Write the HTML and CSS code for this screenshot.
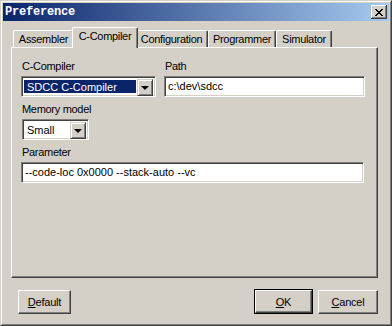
FILE: index.html
```html
<!DOCTYPE html>
<html lang="en">
<head>
    <meta charset="UTF-8">
    <title>Preference</title>
    <link rel="stylesheet" href="styles.css">
</head>
<body>

<div class="window">
    <div class="window-inner">
        <div class="title-bar">
            <span class="title">Preference</span>
            <button class="close-button">
                <svg width="8" height="7" viewBox="0 0 8 7">
                    <path d="M0 0h2v1h1v1h2v-1h1v-1h2v1h-1v1h-1v1h-1v1h1v1h1v1h1v1h-2v-1h-1v-1h-2v1h-1v1h-2v-1h1v-1h1v-1h1v-1h-1v-1h-1v-1h-1z" fill="#000"/>
                </svg>
            </button>
        </div>

        <div class="content">
            <div class="tabs">
                <div class="tab tab-assembler">Assembler</div>
                <div class="tab tab-compiler active">C-Compiler</div>
                <div class="tab tab-config">Configuration</div>
                <div class="tab tab-programmer">Programmer</div>
                <div class="tab tab-simulator">Simulator</div>
            </div>

            <div class="panel">
                <div class="row">
                    <div class="field compiler-field">
                        <label>C-Compiler</label>
                        <div class="combo combo-compiler">
                            <span class="combo-value selected">SDCC C-Compiler</span>
                            <span class="combo-button"><span class="arrow"></span></span>
                        </div>
                    </div>
                    <div class="field path-field">
                        <label>Path</label>
                        <div class="textbox">c:\dev\sdcc</div>
                    </div>
                </div>

                <div class="field">
                    <label>Memory model</label>
                    <div class="combo combo-memory">
                        <span class="combo-value">Small</span>
                        <span class="combo-button"><span class="arrow"></span></span>
                    </div>
                </div>

                <div class="field">
                    <label>Parameter</label>
                    <div class="textbox textbox-wide">--code-loc 0x0000 --stack-auto --vc</div>
                </div>
            </div>

            <div class="buttons">
                <button class="btn btn-default"><u>D</u>efault</button>
                <div class="spacer"></div>
                <div class="btn-frame">
                    <button class="btn btn-ok"><u>O</u>K</button>
                </div>
                <button class="btn btn-cancel"><u>C</u>ancel</button>
            </div>
        </div>
    </div>
</div>

</body>
</html>
```

FILE: styles.css
```css
body {
    margin: 0;
    font-family: "Liberation Sans", Arial, sans-serif;
    font-size: 11px;
    color: #000;
    background-color: #d4d0c8;
}

.window {
    width: 392px;
    height: 326px;
    box-sizing: border-box;
    border: 1px solid;
    border-color: #d4d0c8 #404040 #404040 #d4d0c8;
    background-color: #d4d0c8;
}

.window-inner {
    height: 100%;
    box-sizing: border-box;
    border: 1px solid;
    border-color: #fff #808080 #808080 #fff;
    padding: 1px;
    display: flex;
    flex-direction: column;
}

/* Barra de titulo */
.title-bar {
    height: 18px;
    display: flex;
    align-items: center;
    justify-content: space-between;
    padding: 0 2px 0 2px;
    background: linear-gradient(to right, #0a246a, #a6caf0);
}

.title {
    font-family: "Liberation Mono", "Courier New", monospace;
    font-weight: bold;
    font-size: 12px;
    color: #fff;
    letter-spacing: -0.2px;
}

.close-button {
    width: 16px;
    height: 14px;
    padding: 0;
    margin: 0;
    display: flex;
    align-items: center;
    justify-content: center;
    background-color: #d4d0c8;
    border: none;
    box-shadow: inset -1px -1px #404040, inset 1px 1px #fff, inset -2px -2px #808080;
}

.content {
    flex: 1;
    display: flex;
    flex-direction: column;
    padding: 6px 11px 0 8px;
}

/* Abas */
.tabs {
    display: flex;
    align-items: flex-end;
    height: 20px;
    padding-left: 2px;
    position: relative;
    z-index: 2;
}

.tab {
    height: 17px;
    box-sizing: border-box;
    border-top: 1px solid #fff;
    border-left: 1px solid #fff;
    border-right: 1px solid #404040;
    border-radius: 2px 2px 0 0;
    box-shadow: inset -1px 0 #808080;
    text-align: center;
    line-height: 15px;
    padding-top: 1px;
    letter-spacing: -0.3px;
}

.tab-assembler { width: 61px; }
.tab-compiler { width: 62px; }
.tab-config { width: 72px; }
.tab-programmer { width: 68px; }
.tab-simulator { width: 56px; }

.tab.active {
    height: 21px;
    margin: 0 -2px -1px -2px;
    width: 66px;
    background-color: #d4d0c8;
    position: relative;
    z-index: 3;
    padding-top: 0;
    line-height: 16px;
}

.tab-config {
    border-left: none;
}

/* Painel */
.panel {
    height: 231px;
    box-sizing: border-box;
    border: 1px solid;
    border-color: #fff #404040 #404040 #fff;
    box-shadow: inset -1px -1px #808080;
    padding: 12px 12px 0 9px;
    display: flex;
    flex-direction: column;
    gap: 6px;
}

.row {
    display: flex;
    gap: 8px;
}

.field {
    display: flex;
    flex-direction: column;
}

.field label {
    height: 13px;
    line-height: 13px;
    padding-left: 1px;
    margin-bottom: 3px;
    letter-spacing: -0.3px;
}

.compiler-field {
    width: 135px;
}

.path-field {
    flex: 1;
}

.textbox,
.combo {
    height: 21px;
    box-sizing: border-box;
    background-color: #fff;
    border: 1px solid;
    border-color: #808080 #fff #fff #808080;
    box-shadow: inset 1px 1px #404040, inset -1px -1px #d4d0c8;
}

.textbox {
    padding: 0 3px;
    line-height: 19px;
}

.textbox-wide {
    margin-right: 1px;
}

.combo {
    display: flex;
    padding: 2px;
}

.combo-compiler {
    width: 135px;
}

.combo-memory {
    width: 67px;
    margin-left: 1px;
}

.combo-value {
    flex: 1;
    line-height: 15px;
    padding-left: 2px;
    margin: 1px 1px 1px 0;
}

.combo-value.selected {
    background-color: #0a246a;
    color: #fff;
    margin-left: 0;
    padding-left: 3px;
}

.combo-button {
    width: 16px;
    height: 17px;
    box-sizing: border-box;
    background-color: #d4d0c8;
    border: 1px solid;
    border-color: #d4d0c8 #404040 #404040 #d4d0c8;
    box-shadow: inset 1px 1px #fff, inset -1px -1px #808080;
    display: flex;
    align-items: center;
    justify-content: center;
}

.arrow {
    width: 0;
    height: 0;
    border-left: 4px solid transparent;
    border-right: 4px solid transparent;
    border-top: 4px solid #000;
    margin-left: -1px;
}

/* Botoes */
.buttons {
    display: flex;
    align-items: center;
    margin-top: 11px;
    padding-left: 7px;
}

.spacer {
    flex: 1;
}

.btn {
    height: 24px;
    padding: 0;
    font-family: "Liberation Sans", Arial, sans-serif;
    font-size: 11px;
    color: #000;
    background-color: #d4d0c8;
    border: 1px solid;
    border-color: #fff #404040 #404040 #fff;
    box-shadow: inset -1px -1px #808080;
    letter-spacing: -0.2px;
}

.btn-default {
    width: 53px;
}

.btn-frame {
    border: 1px solid #000;
    display: flex;
}

.btn-ok {
    width: 57px;
    height: 23px;
}

.btn-cancel {
    width: 60px;
    margin-left: 5px;
}
```
